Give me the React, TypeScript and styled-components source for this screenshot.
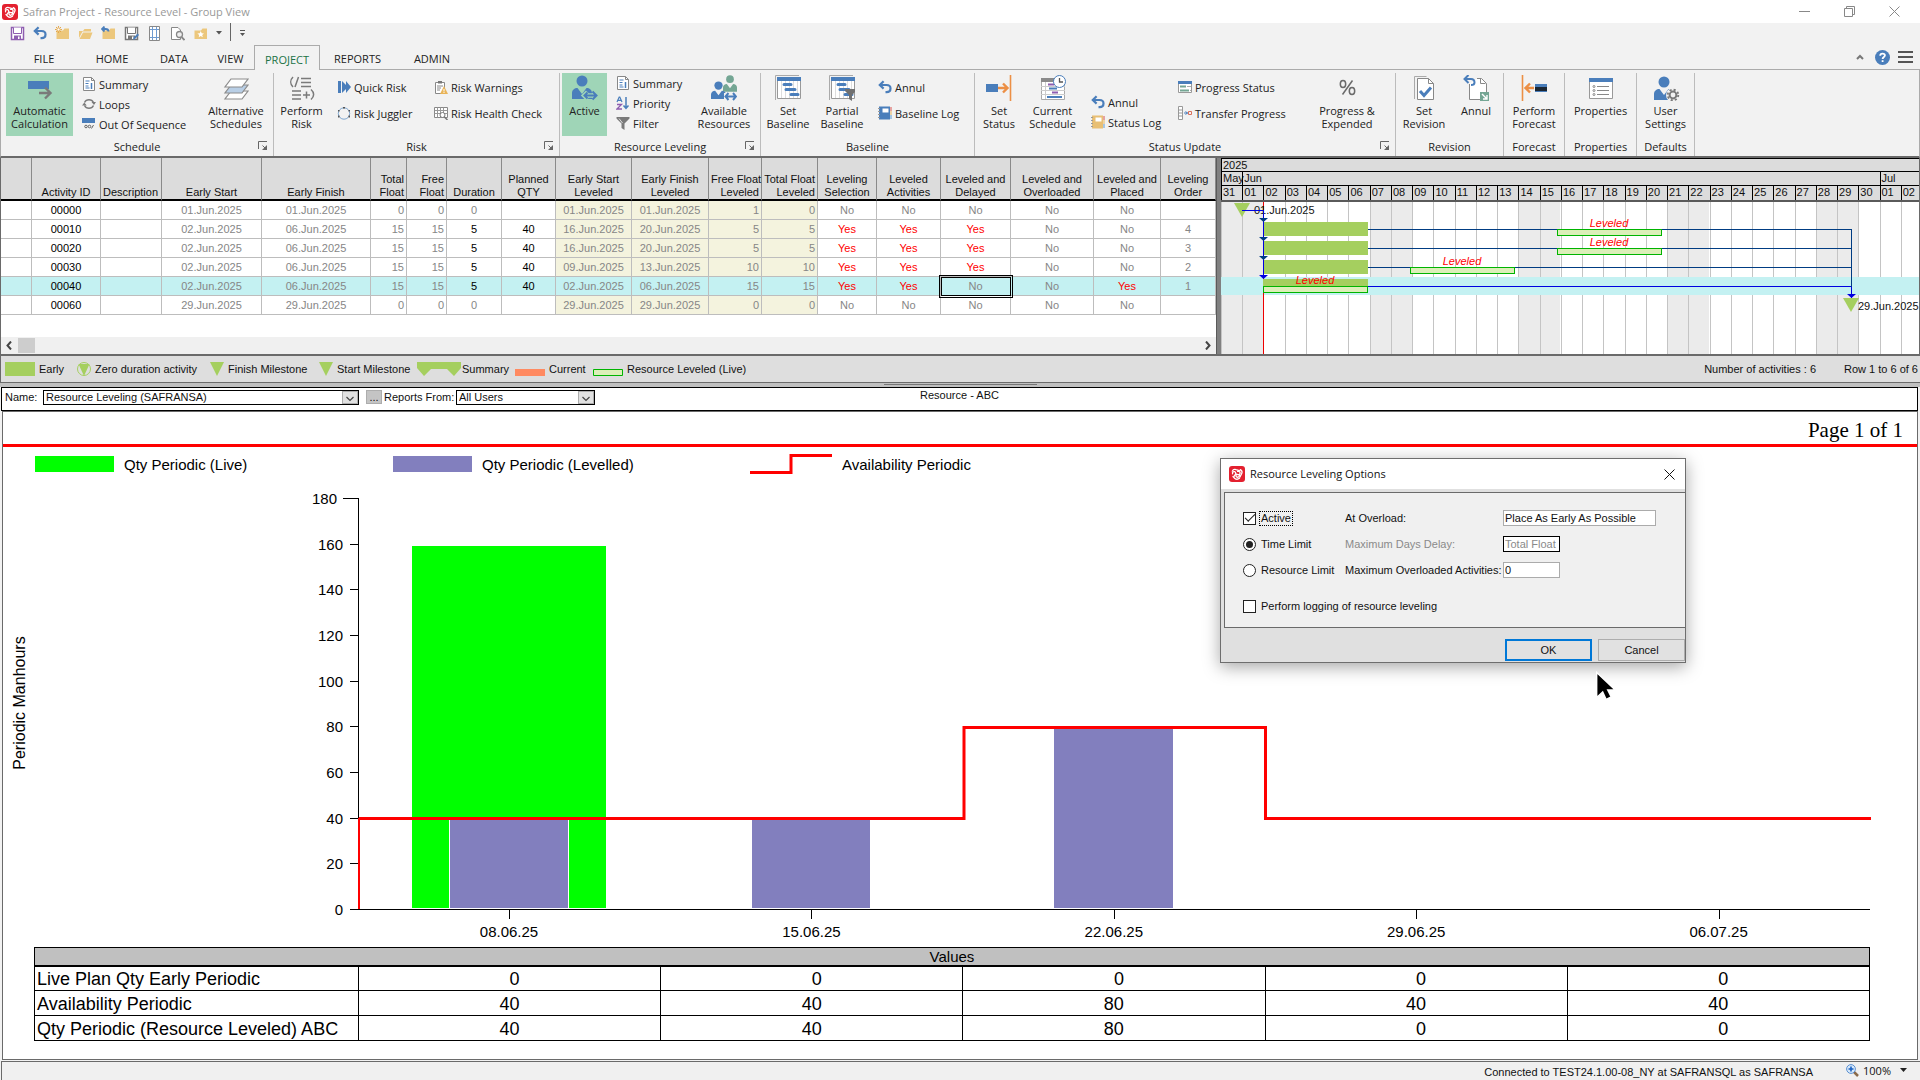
import React from "react";
import styled, { createGlobalStyle, css } from "styled-components";

const UI = `"Open Sans", "Noto Sans", sans-serif`;
const SANS = `"Liberation Sans", Arial, sans-serif`;

const Global = createGlobalStyle`
  * { box-sizing: border-box; }
  html, body, #root { height: 100%; }
  body { margin: 0; background: #f2f2f2; color: #111; font: 11px/13px ${SANS}; overflow: hidden; }
  button, input, select { font: inherit; color: inherit; margin: 0; border-radius: 0; }
  svg { display: block; flex: none; }
`;

const BLUE = "#4a7ebb";
const GREY = "#7a7a7a";
const LIME = "#a5cf5f";

const Shell = styled.div`
  display: flex;
  flex-direction: column;
  min-height: 100vh;
`;

/* ---------- window chrome ---------- */
const TitleBar = styled.header`
  display: flex;
  align-items: center;
  height: 23px;
  padding: 0 20px 0 2px;
  gap: 5px;
  background: #fff;
  color: #999;
  font: 11px/16px ${UI};
`;
const Spacer = styled.div`
  flex: 1;
`;
const WindowButtons = styled.div`
  display: flex;
  gap: 34px;
`;
const BareButton = styled.button`
  display: flex;
  align-items: center;
  justify-content: center;
  padding: 0;
  border: 0;
  background: none;
`;
const QuickBar = styled.div`
  display: flex;
  align-items: center;
  height: 22px;
  padding: 0 0 2px 10px;
  gap: 8px;
`;
const QuickRule = styled.span`
  width: 1px;
  height: 18px;
  background: #666;
  align-self: flex-start;
`;
const TabBar = styled.nav`
  display: flex;
  height: 25px;
  padding: 0 7px 0 5px;
  border-bottom: 1px solid #ababab;
`;
const Tab = styled.button<{ $w: number; $on?: boolean }>`
  width: ${(p) => p.$w}px;
  height: 25px;
  padding: 3px 0 0;
  border: 1px solid transparent;
  border-bottom: 0;
  background: #f2f2f2;
  background-clip: padding-box;
  color: #222;
  font: 11px/16px ${UI};
  ${(p) =>
    p.$on
      ? css`
          border-color: #ababab;
          color: #217346;
        `
      : css`
          height: 24px;
        `}
`;
const TabTools = styled.div`
  display: flex;
  align-items: center;
  gap: 8px;
`;

/* ---------- ribbon ---------- */
const Ribbon = styled.section`
  display: flex;
  height: 88px;
  padding-top: 3px;
  border: 1px solid #ababab;
  border-top: 0;
  border-bottom: 2px solid #6a6a6a;
  font: 11px/13px ${UI};
  color: #222;
`;
const Group = styled.div<{ $w: number }>`
  width: ${(p) => p.$w}px;
  flex: none;
  display: flex;
  flex-direction: column;
  border-right: 1px solid #bcbcbc;
`;
const GroupBody = styled.div<{ $cols: string; $pad: number }>`
  display: grid;
  grid-template-columns: ${(p) => p.$cols};
  height: 64px;
  padding-left: ${(p) => p.$pad}px;
`;
const GroupFoot = styled.div<{ $launch?: boolean }>`
  display: grid;
  grid-template-columns: ${(p) => (p.$launch ? "20px 1fr 20px" : "1fr")};
  align-items: center;
  height: 20px;
  text-align: center;
  white-space: nowrap;
`;
const GroupName = styled.span<{ $launch?: boolean }>`
  grid-column: ${(p) => (p.$launch ? 2 : 1)};
`;
const Big = styled.button<{ $on?: boolean }>`
  display: flex;
  flex-direction: column;
  align-items: center;
  gap: 3px;
  padding: 2px 0 0;
  border: 0;
  background: ${(p) => (p.$on ? "#9fd5b7" : "transparent")};
  white-space: pre;
  line-height: 13px;
  text-align: center;
`;
const SmallList = styled.div<{ $end?: boolean; $tight?: boolean }>`
  display: flex;
  flex-direction: column;
  justify-content: ${(p) => (p.$end ? "flex-end" : "flex-start")};
  height: ${(p) => (p.$tight ? 59 : 62)}px;
  padding: ${(p) => (p.$tight ? 0 : 1)}px 0 0 9px;
`;
const Small = styled.button<{ $h: number }>`
  display: flex;
  flex: none;
  align-items: center;
  gap: 3px;
  height: ${(p) => p.$h}px;
  padding: 0;
  border: 0;
  background: none;
  white-space: nowrap;
`;

/* ---------- icons ---------- */
const Logo = ({ size = 16 }: { size?: number }) => (
  <svg width={size} height={size} viewBox="0 0 16 16">
    <rect width="16" height="16" rx="3" fill="#e3202f" />
    <g fill="none" stroke="#fff" strokeWidth="1.300" strokeLinecap="round">
      <path d="M3.300 5.200C4 3.600 5.500 3 7 3.600L11 4.800" />
      <path d="M3.600 7.800C3 6.500 4.200 5.400 5.500 5.700c1.500.4 1.600 2 .6 3.100L5 10.400" />
      <path d="M11.300 3.600C13 4.600 13.400 6.400 12.500 8L10.800 11.200" />
      <path d="M8.600 5.400c1.600-.4 2.800.6 2.500 2-.3 1.400-1.800 1.600-3 1" />
      <path d="M10.500 12.300C9 13.400 7 13.400 5.600 12.200L4 10.500" />
      <path d="M7.600 8.200c-1 1-.8 2.600.4 3 1.300.3 2.300-.6 2.600-1.900" />
    </g>
  </svg>
);
const Undo = () => (
  <svg width="14" height="14" viewBox="0 0 14 14" fill="none" stroke={BLUE} strokeWidth="2.200">
    <path d="M2 5h6.500c2.500 0 4 1.500 4 3.500s-1.500 3.600-4 3.600H7.500" />
    <path d="M5.600 1.200 1.800 5l3.800 3.600" />
  </svg>
);
const Floppy = ({ color = "#8e5db0", pen }: { color?: string; pen?: boolean }) => (
  <svg width="15" height="15" viewBox="0 0 15 15">
    <path d="M1.500 1.500h12v12h-12z" fill="#fff" stroke={color} strokeWidth="1.500" />
    <path d="M3.500 1.500v6h8v-6" fill="#fff" stroke={color} />
    <path d="M4 9.500h7V14H4z" fill={color} />
    <path d="M8 10.500h1.500V13H8z" fill="#fff" />
    {pen && <path d="m9 14 .6-2.500 4-4 1.400 1.500-4 4z" fill={BLUE} />}
  </svg>
);
const Folder = ({ kind }: { kind: "new" | "open" | "back" | "star" }) => (
  <svg width="15" height="15" viewBox="0 0 15 15">
    {kind === "open" ? (
      <g fill="#ecc77c">
        <path d="M1 12V5h4l1.500-2H13v2.500H4.500z" />
        <path d="M1.500 13 5 6.500h9.500L12 13z" />
      </g>
    ) : (
      <path d="M1.500 13V4.500H8L9.500 2.500H14V13z" fill="#ecc77c" />
    )}
    {kind === "new" && (
      <g stroke="#e5a84a" fill="none">
        <circle cx="3.500" cy="3.500" r="1.600" fill="#fff" />
        <path d="M3.500 0v1.500M3.500 5.500V7M0 3.500h1.500M5.500 3.500H7M1 1l1 1M5 5l1 1M1 6l1-1M5 2l1-1" />
      </g>
    )}
    {kind === "back" && (
      <path d="M1 3h3.500C6.500 3 7.500 4 7.500 5.500M3.500.5 1 3l2.500 2.500" fill="none" stroke={BLUE} strokeWidth="1.800" />
    )}
    {kind === "star" && (
      <path d="m7.700 5 1 2.200 2.300.2-1.800 1.500.6 2.300-2.100-1.200-2 1.200.5-2.300-1.800-1.500 2.400-.2z" fill="#fff" />
    )}
  </svg>
);
const PageGrid = () => (
  <svg width="15" height="15" viewBox="0 0 15 15" fill="none">
    <path d="M2.500.5h10v14h-10z" stroke="#888" fill="#fff" />
    <path d="M5.500 1v13M9.500 1v13M3 3.500h9M3 11.500h9" stroke="#6f9bd0" />
  </svg>
);
const Preview = () => (
  <svg width="15" height="15" viewBox="0 0 15 15" fill="none" stroke="#888">
    <path d="M1.500 1.500H8L10.500 4v9.500h-9z" fill="#fff" />
    <circle cx="9.500" cy="8.500" r="3" fill="#eee" strokeWidth="1.300" />
    <path d="m11.500 11 3 3" strokeWidth="1.800" />
  </svg>
);
const Caret = () => (
  <svg width="6" height="4" viewBox="0 0 6 4">
    <path d="M0 0h6L3 3.500z" fill="#555" />
  </svg>
);
const Launcher = () => (
  <svg width="10" height="10" viewBox="0 0 10 10" fill="none" stroke="#666">
    <path d="M.5 8V.5H9" />
    <path d="M4.500 4.500 8 8" />
    <path d="M9 4v5H4z" fill="#666" stroke="none" />
  </svg>
);
const Box = ({ children, w = 26 }: { children: React.ReactNode; w?: number }) => (
  <svg width={w} height="26" viewBox={`0 0 ${w} 26`} fill="none">
    {children}
  </svg>
);
const Sm = ({ children }: { children: React.ReactNode }) => (
  <svg width="14" height="14" viewBox="0 0 14 14" fill="none">
    {children}
  </svg>
);
const AutoCalc = () => (
  <Box>
    <path d="M1 6h21v8H1z" fill={BLUE} />
    <path d="M12 18h11M18 12.500l5.500 5.500-5.500 5.500" stroke={GREY} strokeWidth="2.400" />
  </Box>
);
const DocSummary = () => (
  <Sm>
    <path d="M1.500.5h8l3 3v10h-11z" fill="#fff" stroke="#888" />
    <path d="M9.500.5v3h3" stroke="#888" />
    <path d="M3.500 4h4M3.500 6.500h3M3.500 9h3M3.500 11h4" stroke={BLUE} />
    <path d="M9.500 6v6" stroke={BLUE} strokeWidth="1.500" />
  </Sm>
);
const Loops = () => (
  <Sm>
    <path d="M2.500 5.500A5 5 0 0 1 11.500 5.500M11.500 8.500A5 5 0 0 1 2.500 8.500" stroke={GREY} strokeWidth="1.400" />
    <path d="m9.500 5 2.500 3 2-3zM0 8.500l2.300-3 2.500 3z" fill={GREY} />
  </Sm>
);
const OutOfSeq = () => (
  <Sm>
    <path d="M0 1h13v5H0z" fill={BLUE} />
    <g stroke="#666">
      <circle cx="4" cy="9.500" r="1.300" />
      <circle cx="7.500" cy="9.500" r="1.300" />
      <path d="M9.500 11.500 11.500 8" />
    </g>
  </Sm>
);
const Layers = () => (
  <Box>
    <g stroke="#8c8c8c" strokeWidth="1.200">
      <path d="M8 16h17l-6 8H2z" fill="#fff" />
      <path d="M8 10h17l-6 8H2z" fill="#b9cfe6" />
      <path d="M8 4h17l-6 8H2z" fill="#fff" />
    </g>
  </Box>
);
const RiskFormula = () => (
  <Box>
    <g stroke={GREY} strokeWidth="1.500">
      <path d="M4 2C1 5 1 9 4 12M9.500 2 6 12" />
      <path d="M12 3.500h10M12 7.500h10M12 11.500h10M3 16h9M3 20h9M3 24h9" />
      <path d="M14 20h7M17.500 16.500v7M22 14.500c3.500 3 3.500 7 0 10" />
    </g>
  </Box>
);
const QuickRisk = () => (
  <Sm>
    <path d="M1 1h3v12H1zM5 1l4 4V1l5 6-5 6V9l-4 4z" fill={BLUE} />
  </Sm>
);
const Juggler = () => (
  <Sm>
    <circle cx="7" cy="7.500" r="5.700" stroke="#7fa6cf" />
    <path d="M6 1h2v1.500H6zM1 9.500h1.500v2H1zM11.500 9.500H13v2h-1.500zM1 4h1.500v1.500H1zM11.500 4H13v1.500h-1.500z" fill="#555" />
  </Sm>
);
const Clipboard = () => (
  <Sm>
    <path d="M1.500 2.500h9v11h-9z" fill="#fff" stroke="#888" />
    <path d="M4 1h4v2.500H4z" fill="#777" />
    <path d="M3 6h6M3 8h4M3 10h3" stroke="#888" />
    <path d="m10 6 4 8H6z" fill="#e9b458" />
    <path d="M10 9v2.500M10 12v1" stroke="#fff" />
  </Sm>
);
const HealthCheck = () => (
  <Sm>
    <path d="M.5 1.500h13v10H.5z" fill="#fff" stroke="#888" />
    <path d="M3.500 1.500v10M6.500 1.500v10M9.500 1.500v10M.5 4.500h13M.5 7.500h13" stroke="#999" />
    <circle cx="8.500" cy="9" r="2.500" fill="#fff" stroke="#777" />
    <path d="m10.500 11 3 3" stroke="#777" strokeWidth="1.500" />
  </Sm>
);
const Person = ({ x = 0, y = 0, fill = BLUE, s = 1 }: { x?: number; y?: number; fill?: string; s?: number }) => (
  <g transform={`translate(${x} ${y}) scale(${s})`}>
    <circle cx="10" cy="6" r="5.500" fill={fill} />
    <path d="M0 24v-6c0-3 2.500-5 5.500-5L10 19l4.500-6c3 0 5.500 2 5.500 5v6z" fill={fill} />
  </g>
);
const ActivePerson = () => (
  <Box>
    <Person />
    <path d="M12 20.500h13M15.500 17 12 20.500l3.500 3.500M21.500 16.500l4 4-4 4" stroke="#9fd5b7" strokeWidth="4.500" />
    <path d="M12 20.500h12M15.500 17.500 12.500 20.500l3 3M20.500 16.500l4 4-4 4" stroke={BLUE} strokeWidth="2" />
  </Box>
);
const Priority = () => (
  <Sm>
    <path d="m1 6 2.200-5h.6L6 6M2 4.300h3" stroke={BLUE} strokeWidth="1.200" />
    <path d="M1 8.500h4.500L1 13h5" stroke="#8e5db0" strokeWidth="1.300" />
    <path d="M10 1v11M7.500 9.500 10 12.300l2.500-2.800" stroke={BLUE} strokeWidth="1.500" />
  </Sm>
);
const Funnel = () => (
  <Sm>
    <path d="M.5 1h13v1.500L8.500 7.500V14l-3-2V7.500L.5 2.500z" fill={GREY} />
    <path d="M3 2.500 6.500 7" stroke="#ddd" />
  </Sm>
);
const People = () => (
  <Box>
    <Person x={12} y={0} s={0.7} fill="#74a694" />
    <Person x={0} y={6} s={0.75} />
    <path d="M13 21.500h13" stroke="#f2f2f2" strokeWidth="7" />
    <path d="M14.500 21.500h10M17.500 18l-3 3.500 3 3.500M22 18l3 3.500-3 3.500" stroke={BLUE} strokeWidth="2" />
  </Box>
);
const Baseline = ({ filter }: { filter?: boolean }) => (
  <Box>
    <path d="M.5 25V.5H24" stroke="#aaa" />
    <path d="M2.500 2.500h23v21h-23z" fill="#fff" stroke="#999" />
    <path d="M6.500 6v17M10.500 6v17M14.500 6v17M18.500 6v17M22.500 6v17" stroke="#ddd" />
    <path d="M2 2h24v4H2z" fill={BLUE} />
    <path d="M9 9.500h7M11 14.500h9M16 19.500h7" stroke={BLUE} strokeWidth="3" strokeLinecap="round" />
    {filter && <path d="M16 14h11v2l-4 4v6l-3-2v-4l-4-4z" fill="#707070" />}
  </Box>
);
const Book = ({ color }: { color: string }) => (
  <Sm>
    <path d="M1 .5h11v13H1z" fill={color} />
    <path d="M4.500 2.500h6v4h-6z" fill="#fff" />
    <path d="M0 2.500h2M0 5.500h2M0 8.500h2M0 11.500h2" stroke="#999" />
    <path d="M13 1v4" stroke="#d9534f" />
    <path d="M13 5v4" stroke="#e9b458" />
    <path d="M13 9v4" stroke="#5b9bd5" />
  </Sm>
);
const SetStatus = () => (
  <Box>
    <path d="M0 9h12v8H0z" fill={BLUE} />
    <path d="M12 13h9M17 8.500l4.500 4.500-4.500 4.500" stroke="#ec8f45" strokeWidth="2.400" />
    <path d="M24.500 0v26" stroke="#ec8f45" strokeWidth="1.600" />
  </Box>
);
const CurrentSchedule = () => (
  <Box>
    <path d="M1.500 4.500h23v20h-23z" fill="#fff" stroke="#aaa" />
    <path d="M1 3h24v4H1z" fill="#8a8a8a" />
    <path d="M1 11.500h24M1 15.500h24M1 19.500h24M5.500 7v17" stroke="#ccc" />
    <path d="M8 9.500h6M12 17.500h6" stroke="#8e5db0" strokeWidth="2" />
    <path d="M9 13.500h8M7 22h15" stroke={BLUE} strokeWidth="2" />
    <circle cx="19.500" cy="6.500" r="6" fill="#fff" stroke={BLUE} />
    <path d="M19.500 3v4H23" stroke="#555" strokeWidth="1.300" />
  </Box>
);
const ProgressStatus = () => (
  <Sm>
    <path d="M.5 1.500h13v11H.5z" fill="#fff" stroke="#999" />
    <path d="M0 1h14v3H0z" fill={BLUE} />
    <path d="M2 6.500h6M2 10.500h9" stroke="#74a694" strokeWidth="2" />
    <path d="M9 6.500h4M12 10.500h1" stroke="#aaa" />
  </Sm>
);
const Transfer = () => (
  <Sm>
    <path d="M.5.5h4v13h-4zM.5 4h4M.5 7h4M.5 10h4" stroke="#999" fill="#fff" />
    <path d="M6 7h4M7.500 5.500 9.500 7 7.500 8.500" stroke={BLUE} />
    <path d="M10.500 5.500h3v3h-3z" stroke="#d9705c" />
  </Sm>
);
const Percent = () => (
  <Box>
    <g stroke="#6a6a6a" strokeWidth="1.500">
      <ellipse cx="9" cy="9" rx="2.700" ry="3.500" />
      <ellipse cx="18" cy="16" rx="2.700" ry="3.500" />
      <path d="M18.500 5.500 8.500 19.500" />
    </g>
  </Box>
);
const SetRevision = () => (
  <Box>
    <path d="M3.500 24V1.500h12" stroke="#aaa" />
    <path d="M6.500 3.500h11l5 5v16h-16z" fill="#fff" stroke="#888" />
    <path d="M17.500 3.500v5h5" stroke="#888" />
    <path d="m9 16 4 4.500 7-8" stroke={BLUE} strokeWidth="3" />
  </Box>
);
const AnnulRevision = () => (
  <Box>
    <path d="M6.500 9v15.500h17v-16l-5-5H14" fill="#fff" stroke="#888" />
    <path d="M17.500 3.500v5h5" stroke="#888" />
    <path d="M1.500 4H8c3 0 3.500 2 3.500 3.500S10 10 8 10M5.500 0l-4 4 4 4" stroke={BLUE} strokeWidth="2" />
    <path d="M17 17h10v9H17z" fill="#74a694" />
    <path d="m19 19 5 5M24 20v4h-4" stroke="#fff" strokeWidth="1.400" />
  </Box>
);
const Forecast = () => (
  <Box>
    <path d="M1.500 0v26" stroke="#ec8f45" strokeWidth="1.600" />
    <path d="M4 13h9M9 8.500 4.500 13 9 17.500" stroke="#ec8f45" strokeWidth="2.400" />
    <path d="M14 9h12v8H14z" fill={BLUE} />
    <path d="M14 12h12v4H14z" fill="#1c2733" />
  </Box>
);
const PropsIcon = () => (
  <Box>
    <path d="M1.500 3.500h23v20h-23z" fill="#fff" stroke="#999" />
    <path d="M1 3h24v4H1z" fill={BLUE} />
    <g stroke="#888">
      <path d="M9 11.500h12M9 15.500h12M9 19.500h12" />
      <circle cx="6" cy="11.500" r="1" />
      <circle cx="6" cy="15.500" r="1" />
      <circle cx="6" cy="19.500" r="1" />
    </g>
  </Box>
);
const UserGear = () => (
  <Box w={28}>
    <Person x={2} y={1} />
    <circle cx="21" cy="20" r="7" fill="#f2f2f2" />
    <circle cx="21" cy="20" r="3.400" stroke={GREY} strokeWidth="2" />
    <circle cx="21" cy="20" r="5.300" stroke={GREY} strokeWidth="1.800" strokeDasharray="2.100 2.060" />
  </Box>
);

type SmallItem = [string, React.ReactNode];
const Items = (p: { h: number; items: SmallItem[]; end?: boolean; tight?: boolean }) => (
  <SmallList $end={p.end} $tight={p.tight}>
    {p.items.map(([label, icon]) => (
      <Small key={label} $h={p.h}>
        {icon}
        {label}
      </Small>
    ))}
  </SmallList>
);
const BigItem = ({ label, icon, on }: { label: string; icon: React.ReactNode; on?: boolean }) => (
  <Big $on={on}>
    {icon}
    <span>{label}</span>
  </Big>
);
const RibbonGroup = (p: {
  name: string;
  w: number;
  cols: string;
  pad?: number;
  launch?: boolean;
  children: React.ReactNode;
}) => (
  <Group $w={p.w}>
    <GroupBody $cols={p.cols} $pad={p.pad ?? 0}>
      {p.children}
    </GroupBody>
    <GroupFoot $launch={p.launch}>
      <GroupName $launch={p.launch}>{p.name}</GroupName>
      {p.launch && (
        <BareButton aria-label={`${p.name} options`}>
          <Launcher />
        </BareButton>
      )}
    </GroupFoot>
  </Group>
);

/* ---------- activity grid ---------- */
const Split = styled.main`
  display: flex;
  height: 198px;
  border-bottom: 2px solid #6a6a6a;
  background: #fff;
`;
const GridPane = styled.section`
  display: flex;
  flex-direction: column;
  flex: none;
  width: 1216px;
  border-left: 1px solid #6a6a6a;
`;
const Grid = styled.table`
  table-layout: fixed;
  width: 1215px;
  border-collapse: separate;
  border-spacing: 0;
`;
const Th = styled.th<{ $a?: string }>`
  height: 43px;
  padding: 0 2px;
  vertical-align: bottom;
  text-align: ${(p) => p.$a ?? "center"};
  white-space: pre;
  font-weight: 400;
  background: #dcdcdc;
  border-right: 1px solid #8a8a8a;
  border-bottom: 2px solid #000;
`;
const Tr = styled.tr<{ $sel?: boolean }>`
  background: ${(p) => (p.$sel ? "#c4f1f2" : "#fff")};
`;
const Td = styled.td<{ $a?: string; $c?: string; $bg?: string; $focus?: boolean }>`
  height: 19px;
  padding: 0 2px;
  text-align: ${(p) => p.$a ?? "center"};
  color: ${(p) => p.$c ?? "#868686"};
  background: ${(p) => p.$bg ?? "transparent"};
  border-right: 1px solid #bdbdbd;
  border-bottom: 1px solid #bdbdbd;
  ${(p) =>
    p.$focus &&
    css`
      outline: 3px double #000;
      outline-offset: -1px;
    `}
`;
const HScroll = styled.div`
  display: flex;
  align-items: center;
  height: 17px;
  margin-top: auto;
  padding: 0 5px;
  gap: 6px;
  background: #f0f0f0;
`;
const Thumb = styled.div`
  width: 17px;
  height: 15px;
  background: #cdcdcd;
`;
const Divider = styled.div`
  width: 5px;
  background: #808080;
  border-left: 1px solid #5a5a5a;
`;

const COLS: [string, number, string?][] = [
  ["", 31],
  ["Activity ID", 69],
  ["Description", 61, "left"],
  ["Early Start", 100],
  ["Early Finish", 109],
  ["Total\nFloat", 36, "right"],
  ["Free\nFloat", 40, "right"],
  ["Duration", 55],
  ["Planned\nQTY", 54],
  ["Early Start\nLeveled", 76],
  ["Early Finish\nLeveled", 77],
  ["Free Float\nLeveled", 53, "right"],
  ["Total Float\nLeveled", 56, "right"],
  ["Leveling\nSelection", 59],
  ["Leveled\nActivities", 64],
  ["Leveled and\nDelayed", 70],
  ["Leveled and\nOverloaded", 83],
  ["Leveled and\nPlaced", 67],
  ["Leveling\nOrder", 55],
];
const J = ".Jun.2025";
const ROWS: string[][] = [
  ["", "00000", "", "01" + J, "01" + J, "0", "0", "0", "", "01" + J, "01" + J, "1", "0", "No", "No", "No", "No", "No", ""],
  ["", "00010", "", "02" + J, "06" + J, "15", "15", "5", "40", "16" + J, "20" + J, "5", "5", "Yes", "Yes", "Yes", "No", "No", "4"],
  ["", "00020", "", "02" + J, "06" + J, "15", "15", "5", "40", "16" + J, "20" + J, "5", "5", "Yes", "Yes", "Yes", "No", "No", "3"],
  ["", "00030", "", "02" + J, "06" + J, "15", "15", "5", "40", "09" + J, "13" + J, "10", "10", "Yes", "Yes", "Yes", "No", "No", "2"],
  ["", "00040", "", "02" + J, "06" + J, "15", "15", "5", "40", "02" + J, "06" + J, "15", "15", "Yes", "Yes", "No", "No", "Yes", "1"],
  ["", "00060", "", "29" + J, "29" + J, "0", "0", "0", "", "29" + J, "29" + J, "0", "0", "No", "No", "No", "No", "No", ""],
];
const SELECTED = 4;
const cellColor = (v: string, c: number) => {
  if (v === "Yes") return "#f00";
  if (c === 1 || c === 8 || (c === 7 && v !== "0")) return "#000";
  return undefined;
};

/* ---------- gantt ---------- */
const GanttPane = styled.section`
  flex: 1;
  min-width: 0;
  overflow: hidden;
  border-right: 1px solid #6a6a6a;
`;
const Scale = styled.div`
  display: grid;
  grid-template-columns: repeat(33, 1fr);
  grid-template-rows: 13px 14px 14px;
  width: 701px;
  background: #dcdcdc;
  border-top: 1px solid #000;
  border-bottom: 2px solid #5a5a5a;
`;
const ScaleCell = styled.div<{ $span: number; $last?: boolean }>`
  grid-column: span ${(p) => p.$span};
  min-width: 0;
  padding-left: 1px;
  line-height: 13px;
  white-space: nowrap;
  border-left: 1px solid #000;
  border-bottom: ${(p) => (p.$last ? 0 : 1)}px solid #000;
`;
const DAY = 701 / 33;
const DAYS = Array.from({ length: 33 }, (_, i) => (i === 0 ? 31 : i <= 30 ? i : i - 30));
const WEEKENDS = [0, 7, 14, 21, 28];
const two = (n: number) => String(n).padStart(2, "0");

const Gantt = () => {
  const x = (d: number) => Math.round(d * DAY);
  const end = x(2) + 105;
  const leveled = [
    [336, 0],
    [336, 1],
    [189, 2],
    [x(2), 3],
  ];
  return (
    <svg width="701" height="152" viewBox="0 0 701 152" fontFamily="Liberation Sans, Arial, sans-serif" fontSize="11">
      <rect width="701" height="152" fill="#fff" />
      {WEEKENDS.map((d) => (
        <rect key={d} x={x(d)} y="0" width={x(2)} height="152" fill="#ebebeb" />
      ))}
      {DAYS.map((_, i) => (
        <path key={i} d={`M${x(i) + 0.5} 0V152`} stroke="#c4c4c4" />
      ))}
      <rect y="75" width="701" height="18" fill="#c4f1f2" />
      <path d={`M${x(2) + 0.5} 0V152`} stroke="#e00" />
      {[0, 1, 2, 3].map((r) => (
        <rect key={r} x={x(2)} y={20 + r * 19} width="105" height="14" fill={LIME} />
      ))}
      {[0, 1, 2, 3].map((r) => (
        <path key={r} d={`M${end} ${27.5 + r * 19}H630.5`} stroke={r === 3 ? "#0000e0" : "#003c82"} />
      ))}
      <path d="M630.500 27V85" stroke="#003c82" />
      <path d="M630.500 85V96" stroke="#0000e0" />
      {leveled.map(([lx, r]) => (
        <g key={r}>
          <rect x={lx + 0.5} y={27.5 + r * 19} width="104" height="6" fill="#dcefb9" stroke="#00b400" />
          <text x={lx + 52} y={25 + r * 19} fill="#f00" fontStyle="italic" textAnchor="middle">
            Leveled
          </text>
        </g>
      ))}
      <path d="M13 1h16l-8 14z" fill={LIME} />
      <text x="33" y="12" fill="#111">01.Jun.2025</text>
      <path d={`M21 8.500H${x(2)}.5V76`} stroke="#0000e0" fill="none" />
      {[16, 35, 54, 73].map((y) => (
        <path key={y} d={`M${x(2) - 4} ${y}h9l-4.500 4z`} fill={y === 73 ? "#0000e0" : "#003c82"} />
      ))}
      <path d="M626 92h9l-4.500 4z" fill="#0000e0" />
      <path d="M622 96h16l-8 14z" fill={LIME} />
      <text x="637" y="108" fill="#111">29.Jun.2025</text>
    </svg>
  );
};

/* ---------- legend strip ---------- */
const LegendBar = styled.div`
  display: grid;
  grid-template-columns: 72px 133px 109px 98px 98px 78px auto 1fr auto auto;
  align-items: center;
  height: 27px;
  padding: 0 2px 0 4px;
  background: #dedede;
  border-bottom: 1px solid #6a6a6a;
  border-left: 1px solid #6a6a6a;
  white-space: nowrap;
`;
const LegendItem = styled.span<{ $gap?: number }>`
  display: flex;
  align-items: center;
  gap: ${(p) => p.$gap ?? 4}px;
`;
const Counter = styled.span`
  padding-left: 28px;
`;
const Shape = ({ w, children }: { w: number; children: React.ReactNode }) => (
  <svg width={w} height="14" viewBox={`0 0 ${w} 14`} fill={LIME}>
    {children}
  </svg>
);
const Sash = styled.div`
  display: flex;
  justify-content: center;
  height: 4px;
  padding-top: 1px;
  background: #c0c0c0;
`;
const Grip = styled.span`
  width: 153px;
  height: 1px;
  background: #777;
`;

/* ---------- report ---------- */
const NameBar = styled.div`
  display: grid;
  grid-template-columns: 1fr auto 1fr;
  height: 24px;
  margin: 0 2px 0 1px;
  border: 1px solid #000;
  background: #fff;
`;
const NameTools = styled.div`
  display: flex;
  align-items: center;
  height: 18px;
  padding-left: 3px;
  white-space: nowrap;
`;
const FieldLabel = styled.label<{ $w: number }>`
  width: ${(p) => p.$w}px;
`;
const Picker = styled.span<{ $w: number }>`
  display: grid;
  width: ${(p) => p.$w}px;
  height: 15px;
  border: 1px solid #000;
  & > * {
    grid-area: 1 / 1;
  }
`;
const Select = styled.select`
  appearance: none;
  min-width: 0;
  padding: 0 2px;
  border: 0;
  background: #fff;
  line-height: 13px;
  outline: 0;
`;
const Arrow = styled.span`
  display: flex;
  align-items: flex-end;
  justify-content: center;
  justify-self: end;
  width: 16px;
  padding-bottom: 1px;
  background: #e1e1e1;
  border: 1px solid #adadad;
  pointer-events: none;
`;
const More = styled.button`
  width: 16px;
  height: 14px;
  margin: 0 2px 0 7px;
  padding: 0;
  line-height: 8px;
  border: 1px solid #adadad;
  background: #c4c4c4;
`;
const PaneTitle = styled.div`
  padding-top: 1px;
`;
const DownArrow = () => (
  <Arrow>
    <svg width="8" height="6" viewBox="0 0 8 6" fill="none" stroke="#444" strokeWidth="1.200">
      <path d="m.5 1 3.500 3.500L7.500 1" />
    </svg>
  </Arrow>
);
const Report = styled.section`
  flex: 1;
  display: flex;
  flex-direction: column;
  margin: 0 2px 1px;
  border: 1px solid #6a6a6a;
  background: #fff;
  color: #000;
`;
const PageNo = styled.div`
  height: 35px;
  padding: 6px 14px 0 0;
  text-align: right;
  font: 21px/24px "Liberation Serif", "Times New Roman", serif;
  border-bottom: 3px solid #f00;
`;
const ChartLegend = styled.div`
  display: grid;
  grid-template-columns: 358px 357px 357px;
  align-items: center;
  height: 33px;
  padding: 1px 0 0 32px;
  font-size: 15px;
`;
const ChartKey = styled.span`
  display: flex;
  align-items: center;
  gap: 10px;
`;
const Swatch = styled.span<{ $c: string }>`
  width: 79px;
  height: 16px;
  background: ${(p) => p.$c};
`;
const ChartSvg = styled.svg`
  width: 100%;
  height: auto;
`;
const Values = styled.table`
  table-layout: fixed;
  width: calc(100% - 78px);
  margin-left: 31px;
  border-collapse: collapse;
  font-size: 18px;
  line-height: 20px;
`;
const ValuesHead = styled.th`
  height: 18px;
  padding: 1px 0 0;
  font-size: 15px;
  line-height: 15px;
  font-weight: 400;
  background: #c0c0c0;
  border: 1px solid #000;
  border-bottom-width: 2px;
`;
const ValuesName = styled.th`
  height: 25px;
  padding: 2px 2px 0;
  text-align: left;
  font-weight: 400;
  white-space: nowrap;
  border: 1px solid #000;
`;
const ValuesCell = styled.td`
  padding: 2px 0 0;
  border: 1px solid #000;
`;
const Num = styled.span`
  display: block;
  width: calc(50% + 10px);
  text-align: right;
`;

const PURPLE = "#827fbe";
const TICKS = [0, 20, 40, 60, 80, 100, 120, 140, 160, 180];
const base = 429;
const vy = (v: number) => base - (v * 411) / 180;
const bar = (v: number) => ({ y: Math.round(vy(v)) + 2, height: base - 3 - Math.round(vy(v)) });
const Chart = () => (
  <ChartSvg viewBox="0 0 1914 467" fontFamily="Liberation Sans, Arial, sans-serif" fontSize="15" fill="#000">
    <rect x="409" width="194" {...bar(160)} fill="#0f0" />
    <rect x="446" width="120" {...bar(40)} fill="#fff" />
    <rect x="447" width="118" {...bar(40)} fill={PURPLE} />
    <rect x="749" width="118" {...bar(40)} fill={PURPLE} />
    <rect x="1051" width="119" {...bar(80)} fill={PURPLE} />
    <g stroke="#000" strokeWidth="1" shapeRendering="crispEdges">
      <path d="M355.500 18V429.500H1867" fill="none" />
      {TICKS.map((v) => (
        <path key={v} d={`M${v === 180 ? 340 : 347} ${Math.round(vy(v)) + 0.5}H355`} />
      ))}
      {[0, 1, 2, 3, 4].map((i) => (
        <path key={i} d={`M${Math.round(506 + i * 302.4)}.5 430v9`} />
      ))}
    </g>
    {TICKS.map((v) => (
      <text key={v} x={v === 180 ? 334 : 340} y={vy(v) + 6} textAnchor="end">
        {v}
      </text>
    ))}
    {["08.06.25", "15.06.25", "22.06.25", "29.06.25", "06.07.25"].map((d, i) => (
      <text key={d} x={506 + i * 302.4} y="457" textAnchor="middle">
        {d}
      </text>
    ))}
    <text transform="translate(22 223) rotate(-90)" textAnchor="middle" fontSize="16">
      Periodic Manhours
    </text>
    <path d="M356 429V338" stroke="#f00" strokeWidth="2" />
    <path d="M356 338.500H961V247.500H1262.500V338.500H1868" stroke="#f00" strokeWidth="3" fill="none" />
  </ChartSvg>
);
const VALUES: [string, number[]][] = [
  ["Live Plan Qty Early Periodic", [0, 0, 0, 0, 0]],
  ["Availability Periodic", [40, 40, 80, 40, 40]],
  ["Qty Periodic (Resource Leveled) ABC", [40, 40, 80, 0, 0]],
];

/* ---------- status bar ---------- */
const StatusBar = styled.footer`
  display: flex;
  align-items: center;
  justify-content: flex-end;
  height: 19px;
  margin-left: 1px;
  padding: 0 13px 1px 0;
  gap: 4px;
  background: #f0f0f0;
  border-top: 1px solid #6a6a6a;
  border-left: 1px solid #6a6a6a;
`;
const Connection = styled.span`
  margin-right: 29px;
  padding-top: 4px;
`;
const ZoomButton = styled.button`
  display: flex;
  align-items: center;
  gap: 4px;
  padding: 0;
  border: 0;
  background: none;
  font: 11px/16px ${UI};
`;
const ZoomCaret = styled.span`
  padding-left: 4px;
`;

/* ---------- dialog ---------- */
const Dialog = styled.section`
  position: absolute;
  left: 1220px;
  top: 458px;
  width: 466px;
  background: #e0e0e0;
  border: 1px solid #6e6e6e;
  box-shadow: 0 4px 16px rgba(0, 0, 0, 0.35);
  color: #111;
`;
const DialogTitle = styled.header`
  display: flex;
  align-items: center;
  justify-content: space-between;
  height: 30px;
  padding: 0 10px 0 8px;
  background: #fff;
  font: 11px/16px ${UI};
`;
const TitleText = styled.span`
  display: flex;
  align-items: center;
  gap: 5px;
`;
const Panel = styled.div`
  margin: 3px 0 0 3px;
  padding: 12px 0 8px 18px;
  background: #f0f0f0;
  border: 1px solid #6a6a6a;
  border-right: 0;
`;
const Form = styled.div`
  display: grid;
  grid-template-columns: 102px 158px 1fr;
  grid-auto-rows: 26px;
  align-items: center;
  white-space: nowrap;
`;
const Option = styled.label<{ $focus?: boolean }>`
  display: flex;
  align-items: center;
  gap: 4px;
  height: 26px;
  & > span {
    padding: 0 1px;
    outline: ${(p) => (p.$focus ? "1px dotted #000" : "0")};
  }
`;
const LogOption = styled(Option)`
  margin-top: 10px;
`;
const Check = styled.input`
  appearance: none;
  display: grid;
  place-items: center;
  flex: none;
  width: 13px;
  height: 13px;
  border: 1px solid #222;
  background: #fff;
  &[type="radio"] {
    border-radius: 50%;
  }
  &[type="radio"]:checked::before {
    content: "";
    width: 7px;
    height: 7px;
    border-radius: 50%;
    background: #222;
  }
  &[type="checkbox"]:checked::before {
    content: "";
    width: 9px;
    height: 4px;
    margin-bottom: 3px;
    border: solid #222;
    border-width: 0 0 1px 1px;
    transform: rotate(-45deg);
  }
`;
const Caption = styled.label<{ $off?: boolean }>`
  color: ${(p) => (p.$off ? "#8a8a8a" : "inherit")};
`;
const Input = styled.input<{ $w: number; $strong?: boolean }>`
  width: ${(p) => p.$w}px;
  height: 16px;
  padding: 0 1px;
  background: #fff;
  border: 1px solid ${(p) => (p.$strong ? "#000" : "#ababab")};
  &:disabled {
    color: #8a8a8a;
  }
`;
const Actions = styled.div`
  display: flex;
  justify-content: flex-end;
  gap: 6px;
  padding: 11px 0 1px;
`;
const DialogButton = styled.button<{ $primary?: boolean }>`
  width: 87px;
  height: 22px;
  padding: 0;
  background: #e1e1e1;
  border: ${(p) => (p.$primary ? "2px solid #0078d7" : "1px solid #adadad")};
`;
const Pointer = styled.svg`
  position: absolute;
  left: 1596px;
  top: 671px;
`;
const Cross = ({ size, color }: { size: number; color: string }) => (
  <svg width={size} height={size} viewBox="0 0 11 11" stroke={color}>
    <path d="m.5.5 10 10M10.500.5l-10 10" />
  </svg>
);

export default function App() {
  return (
    <Shell>
      <Global />
      <TitleBar>
        <Logo />
        <span>Safran Project - Resource Level - Group View</span>
        <Spacer />
        <WindowButtons>
          <BareButton aria-label="Minimize">
            <svg width="11" height="11" viewBox="0 0 11 11" stroke="#888">
              <path d="M0 5.500h11" />
            </svg>
          </BareButton>
          <BareButton aria-label="Restore">
            <svg width="11" height="11" viewBox="0 0 11 11" fill="none" stroke="#888">
              <path d="M.5 2.500h8v8h-8zM2.500 2.500v-2h8v8h-2" />
            </svg>
          </BareButton>
          <BareButton aria-label="Close">
            <Cross size={11} color="#888" />
          </BareButton>
        </WindowButtons>
      </TitleBar>

      <QuickBar>
        <BareButton aria-label="Save"><Floppy /></BareButton>
        <BareButton aria-label="Undo"><Undo /></BareButton>
        <BareButton aria-label="New folder"><Folder kind="new" /></BareButton>
        <BareButton aria-label="Open folder"><Folder kind="open" /></BareButton>
        <BareButton aria-label="Close folder"><Folder kind="back" /></BareButton>
        <BareButton aria-label="Save as"><Floppy color="#777" pen /></BareButton>
        <BareButton aria-label="Page setup"><PageGrid /></BareButton>
        <BareButton aria-label="Preview"><Preview /></BareButton>
        <BareButton aria-label="Favorites"><Folder kind="star" /></BareButton>
        <Caret />
        <QuickRule />
        <BareButton aria-label="Customize">
          <svg width="7" height="7" viewBox="0 0 7 7">
            <path d="M1 0h5v1H1zM1 3h5L3.500 6z" fill="#555" />
          </svg>
        </BareButton>
      </QuickBar>

      <TabBar>
        <Tab $w={78}>FILE</Tab>
        <Tab $w={58}>HOME</Tab>
        <Tab $w={66}>DATA</Tab>
        <Tab $w={47}>VIEW</Tab>
        <Tab $w={66} $on>PROJECT</Tab>
        <Tab $w={75}>REPORTS</Tab>
        <Tab $w={74}>ADMIN</Tab>
        <Spacer />
        <TabTools>
          <BareButton aria-label="Collapse ribbon">
            <svg width="14" height="8" viewBox="0 0 14 8" fill="none" stroke="#777" strokeWidth="2">
              <path d="m4 6 3-3 3 3" />
            </svg>
          </BareButton>
          <BareButton aria-label="Help">
            <svg width="15" height="15" viewBox="0 0 15 15">
              <circle cx="7.500" cy="7.500" r="7.500" fill={BLUE} />
              <path d="M5.200 5.800C5.200 4.300 6.200 3.600 7.500 3.600S9.900 4.300 9.900 5.500C9.900 7 7.600 7 7.600 9" fill="none" stroke="#fff" strokeWidth="1.800" />
              <path d="M6.700 10.200h1.800V12H6.700z" fill="#fff" />
            </svg>
          </BareButton>
          <BareButton aria-label="Menu">
            <svg width="15" height="12" viewBox="0 0 15 12" stroke="#222" strokeWidth="1.500">
              <path d="M0 1h15M0 6h15M0 11h15" />
            </svg>
          </BareButton>
        </TabTools>
      </TabBar>

      <Ribbon>
        <RibbonGroup name="Schedule" w={273} pad={5} cols="67px 131px 64px" launch>
          <BigItem on label={"Automatic\nCalculation"} icon={<AutoCalc />} />
          <Items h={20} items={[["Summary", <DocSummary />], ["Loops", <Loops />], ["Out Of Sequence", <OutOfSeq />]]} />
          <BigItem label={"Alternative\nSchedules"} icon={<Layers />} />
        </RibbonGroup>
        <RibbonGroup name="Risk" w={286} pad={1} cols="53px 97px 1fr" launch>
          <BigItem label={"Perform\nRisk"} icon={<RiskFormula />} />
          <Items h={26} items={[["Quick Risk", <QuickRisk />], ["Risk Juggler", <Juggler />]]} />
          <Items h={26} items={[["Risk Warnings", <Clipboard />], ["Risk Health Check", <HealthCheck />]]} />
        </RibbonGroup>
        <RibbonGroup name="Resource Leveling" w={201} pad={2} cols="45px 85px 64px" launch>
          <BigItem on label="Active" icon={<ActivePerson />} />
          <Items tight h={20} items={[["Summary", <DocSummary />], ["Priority", <Priority />], ["Filter", <Funnel />]]} />
          <BigItem label={"Available\nResources"} icon={<People />} />
        </RibbonGroup>
        <RibbonGroup name="Baseline" w={214} cols="54px 54px 1fr">
          <BigItem label={"Set\nBaseline"} icon={<Baseline />} />
          <BigItem label={"Partial\nBaseline"} icon={<Baseline filter />} />
          <Items h={26} items={[["Annul", <Undo />], ["Baseline Log", <Book color={BLUE} />]]} />
        </RibbonGroup>
        <RibbonGroup name="Status Update" w={421} cols="48px 59px 87px 138px 80px" launch>
          <BigItem label={"Set\nStatus"} icon={<SetStatus />} />
          <BigItem label={"Current\nSchedule"} icon={<CurrentSchedule />} />
          <Items tight end h={20} items={[["Annul", <Undo />], ["Status Log", <Book color="#e8bf74" />]]} />
          <Items h={26} items={[["Progress Status", <ProgressStatus />], ["Transfer Progress", <Transfer />]]} />
          <BigItem label={"Progress &\nExpended"} icon={<Percent />} />
        </RibbonGroup>
        <RibbonGroup name="Revision" w={108} cols="56px 48px">
          <BigItem label={"Set\nRevision"} icon={<SetRevision />} />
          <BigItem label="Annul" icon={<AnnulRevision />} />
        </RibbonGroup>
        <RibbonGroup name="Forecast" w={61} cols="1fr">
          <BigItem label={"Perform\nForecast"} icon={<Forecast />} />
        </RibbonGroup>
        <RibbonGroup name="Properties" w={72} cols="1fr">
          <BigItem label="Properties" icon={<PropsIcon />} />
        </RibbonGroup>
        <RibbonGroup name="Defaults" w={58} cols="1fr">
          <BigItem label={"User\nSettings"} icon={<UserGear />} />
        </RibbonGroup>
      </Ribbon>

      <Split>
        <GridPane>
          <Grid>
            <colgroup>
              {COLS.map(([, w], i) => (
                <col key={i} width={w} />
              ))}
            </colgroup>
            <thead>
              <tr>
                {COLS.map(([name, , a], i) => (
                  <Th key={i} $a={a}>{name}</Th>
                ))}
              </tr>
            </thead>
            <tbody>
              {ROWS.map((row, r) => (
                <Tr key={r} $sel={r === SELECTED}>
                  {row.map((v, c) => (
                    <Td
                      key={c}
                      $a={COLS[c][2]}
                      $c={cellColor(v, c)}
                      $bg={c >= 9 && c <= 12 && r !== SELECTED ? "#f4f3de" : undefined}
                      $focus={r === SELECTED && c === 15}
                    >
                      {v}
                    </Td>
                  ))}
                </Tr>
              ))}
            </tbody>
          </Grid>
          <HScroll>
            <svg width="6" height="9" viewBox="0 0 6 9" fill="none" stroke="#444" strokeWidth="2">
              <path d="M5 .5 1.500 4.500 5 8.500" />
            </svg>
            <Thumb />
            <Spacer />
            <svg width="6" height="9" viewBox="0 0 6 9" fill="none" stroke="#444" strokeWidth="2">
              <path d="M1 .5 4.500 4.500 1 8.500" />
            </svg>
          </HScroll>
        </GridPane>
        <Divider />
        <GanttPane>
          <Scale>
            <ScaleCell $span={33}>2025</ScaleCell>
            <ScaleCell $span={1}>May</ScaleCell>
            <ScaleCell $span={30}>Jun</ScaleCell>
            <ScaleCell $span={2}>Jul</ScaleCell>
            {DAYS.map((d, i) => (
              <ScaleCell key={i} $span={1} $last>{two(d)}</ScaleCell>
            ))}
          </Scale>
          <Gantt />
        </GanttPane>
      </Split>

      <LegendBar>
        <LegendItem><Shape w={30}><path d="M0 0h30v14H0z" /></Shape>Early</LegendItem>
        <LegendItem>
          <Shape w={14}>
            <circle cx="7" cy="7" r="6.500" fill="none" stroke={LIME} />
            <path d="M1.500 2h11L7 14z" />
          </Shape>
          Zero duration activity
        </LegendItem>
        <LegendItem><Shape w={14}><path d="M0 0h14L7 14z" /></Shape>Finish Milestone</LegendItem>
        <LegendItem><Shape w={14}><path d="M0 0h14L7 14z" /></Shape>Start Milestone</LegendItem>
        <LegendItem $gap={1}>
          <Shape w={44}><path d="M0 0h44v6l-7 8-7-7H14l-7 7-7-8z" /></Shape>Summary
        </LegendItem>
        <LegendItem><Shape w={30}><path d="M0 7h30v7H0z" fill="#ff8a61" /></Shape>Current</LegendItem>
        <LegendItem>
          <Shape w={30}><path d="M.5 7.500h29v6H.5z" fill="#dcefb9" stroke="#00b400" /></Shape>
          Resource Leveled (Live)
        </LegendItem>
        <span />
        <span>Number of activities : 6</span>
        <Counter>Row 1 to 6 of 6</Counter>
      </LegendBar>
      <Sash><Grip /></Sash>

      <NameBar>
        <NameTools>
          <FieldLabel $w={38} htmlFor="report">Name:</FieldLabel>
          <Picker $w={316}>
            <Select id="report"><option>Resource Leveling (SAFRANSA)</option></Select>
            <DownArrow />
          </Picker>
          <More aria-label="Browse reports">...</More>
          <FieldLabel $w={72} htmlFor="from">Reports From:</FieldLabel>
          <Picker $w={139}>
            <Select id="from"><option>All Users</option></Select>
            <DownArrow />
          </Picker>
        </NameTools>
        <PaneTitle>Resource - ABC</PaneTitle>
      </NameBar>

      <Report>
        <PageNo>Page 1 of 1</PageNo>
        <ChartLegend>
          <ChartKey><Swatch $c="#0f0" />Qty Periodic (Live)</ChartKey>
          <ChartKey><Swatch $c={PURPLE} />Qty Periodic (Levelled)</ChartKey>
          <ChartKey>
            <svg width="82" height="20" viewBox="0 0 82 20" fill="none" stroke="#f00" strokeWidth="3">
              <path d="M0 18.500h41V1.500h41" />
            </svg>
            Availability Periodic
          </ChartKey>
        </ChartLegend>
        <Chart />
        <Values>
          <colgroup>
            <col style={{ width: `${(324 / 1836) * 100}%` }} />
            <col span={5} />
          </colgroup>
          <thead>
            <tr><ValuesHead colSpan={6}>Values</ValuesHead></tr>
          </thead>
          <tbody>
            {VALUES.map(([name, nums]) => (
              <tr key={name}>
                <ValuesName scope="row">{name}</ValuesName>
                {nums.map((n, i) => (
                  <ValuesCell key={i}><Num>{n}</Num></ValuesCell>
                ))}
              </tr>
            ))}
          </tbody>
        </Values>
      </Report>

      <StatusBar>
        <Connection>Connected to TEST24.1.00-08_NY at SAFRANSQL as SAFRANSA</Connection>
        <ZoomButton>
          <svg width="13" height="13" viewBox="0 0 13 13" fill="none">
            <path d="m8 8 4 4" stroke="#8a6a4a" strokeWidth="2.500" />
            <circle cx="5" cy="5" r="4.400" fill="#d6e8fa" stroke="#5b8fd0" />
            <path d="M5 2.500v5M2.500 5h5" stroke="#1b62c4" strokeWidth="1.600" />
          </svg>
          100%
          <ZoomCaret>
            <svg width="8" height="5" viewBox="0 0 8 5"><path d="M1 0h7L4.500 4z" fill="#222" /></svg>
          </ZoomCaret>
        </ZoomButton>
      </StatusBar>

      <Dialog role="dialog" aria-label="Resource Leveling Options">
        <DialogTitle>
          <TitleText><Logo />Resource Leveling Options</TitleText>
          <BareButton aria-label="Close dialog"><Cross size={11} color="#111" /></BareButton>
        </DialogTitle>
        <Panel>
          <Form>
            <Option $focus><Check type="checkbox" defaultChecked /><span>Active</span></Option>
            <Caption htmlFor="overload">At Overload:</Caption>
            <Input id="overload" $w={153} defaultValue="Place As Early As Possible" />
            <Option><Check type="radio" name="limit" defaultChecked /><span>Time Limit</span></Option>
            <Caption htmlFor="delay" $off>Maximum Days Delay:</Caption>
            <Input id="delay" $w={57} $strong disabled defaultValue="Total Float" />
            <Option><Check type="radio" name="limit" /><span>Resource Limit</span></Option>
            <Caption htmlFor="max">Maximum Overloaded Activities:</Caption>
            <Input id="max" $w={57} defaultValue="0" />
          </Form>
          <LogOption><Check type="checkbox" /><span>Perform logging of resource leveling</span></LogOption>
        </Panel>
        <Actions>
          <DialogButton $primary>OK</DialogButton>
          <DialogButton>Cancel</DialogButton>
        </Actions>
      </Dialog>
      <Pointer width="20" height="30" viewBox="0 0 20 30">
        <path d="M.7 1.500v25l6-5.500 3.500 7.500 5-2.500-3.500-7h7.500z" fill="#000" stroke="#fff" strokeWidth="1.400" />
      </Pointer>
    </Shell>
  );
}
